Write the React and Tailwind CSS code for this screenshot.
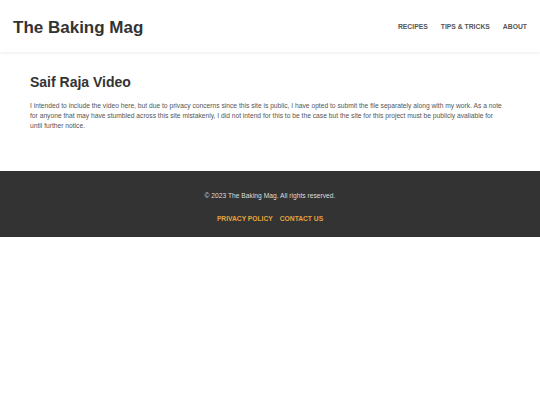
export default function App() {
  return (
    <div className="min-h-[405px] bg-white" style={{ fontFamily: '"Liberation Sans", Arial, sans-serif' }}>
      {/* Header */}
      <header className="h-[52px] flex items-center justify-between px-[13px] pt-[3px] bg-white shadow-[0_1px_3px_rgba(0,0,0,0.08)]">
        <h1 className="text-[17px] font-bold text-[#333] leading-none">The Baking Mag</h1>
        <nav className="flex gap-[13px] text-[6.8px] font-bold text-[#555] uppercase">
          <a>Recipes</a>
          <a>Tips &amp; Tricks</a>
          <a>About</a>
        </nav>
      </header>

      {/* Content */}
      <main className="px-[30px] pt-[20px] h-[119px]">
        <h2 className="text-[14px] font-bold text-[#333] leading-[20px]">Saif Raja Video</h2>
        <p className="mt-[9px] text-[6.7px] leading-[10px] text-[#555] max-w-[477px]">
          I intended to include the video here, but due to privacy concerns since this site is public, I have opted to submit the file separately along with my work. As a note for anyone that may have stumbled across this site mistakenly, I did not intend for this to be the case but the site for this project must be publicly avaliable for until further notice.
        </p>
      </main>

      {/* Footer */}
      <footer className="h-[66px] bg-[#333] flex flex-col items-center pt-[20px]">
        <p className="text-[6.7px] text-[#ddd] leading-[10px]">© 2023 The Baking Mag. All rights reserved.</p>
        <div className="mt-[13px] flex gap-[7px] text-[6.7px] font-bold text-[#e8a33d] uppercase leading-[10px]">
          <a>Privacy Policy</a>
          <a>Contact Us</a>
        </div>
      </footer>
    </div>
  )
}
